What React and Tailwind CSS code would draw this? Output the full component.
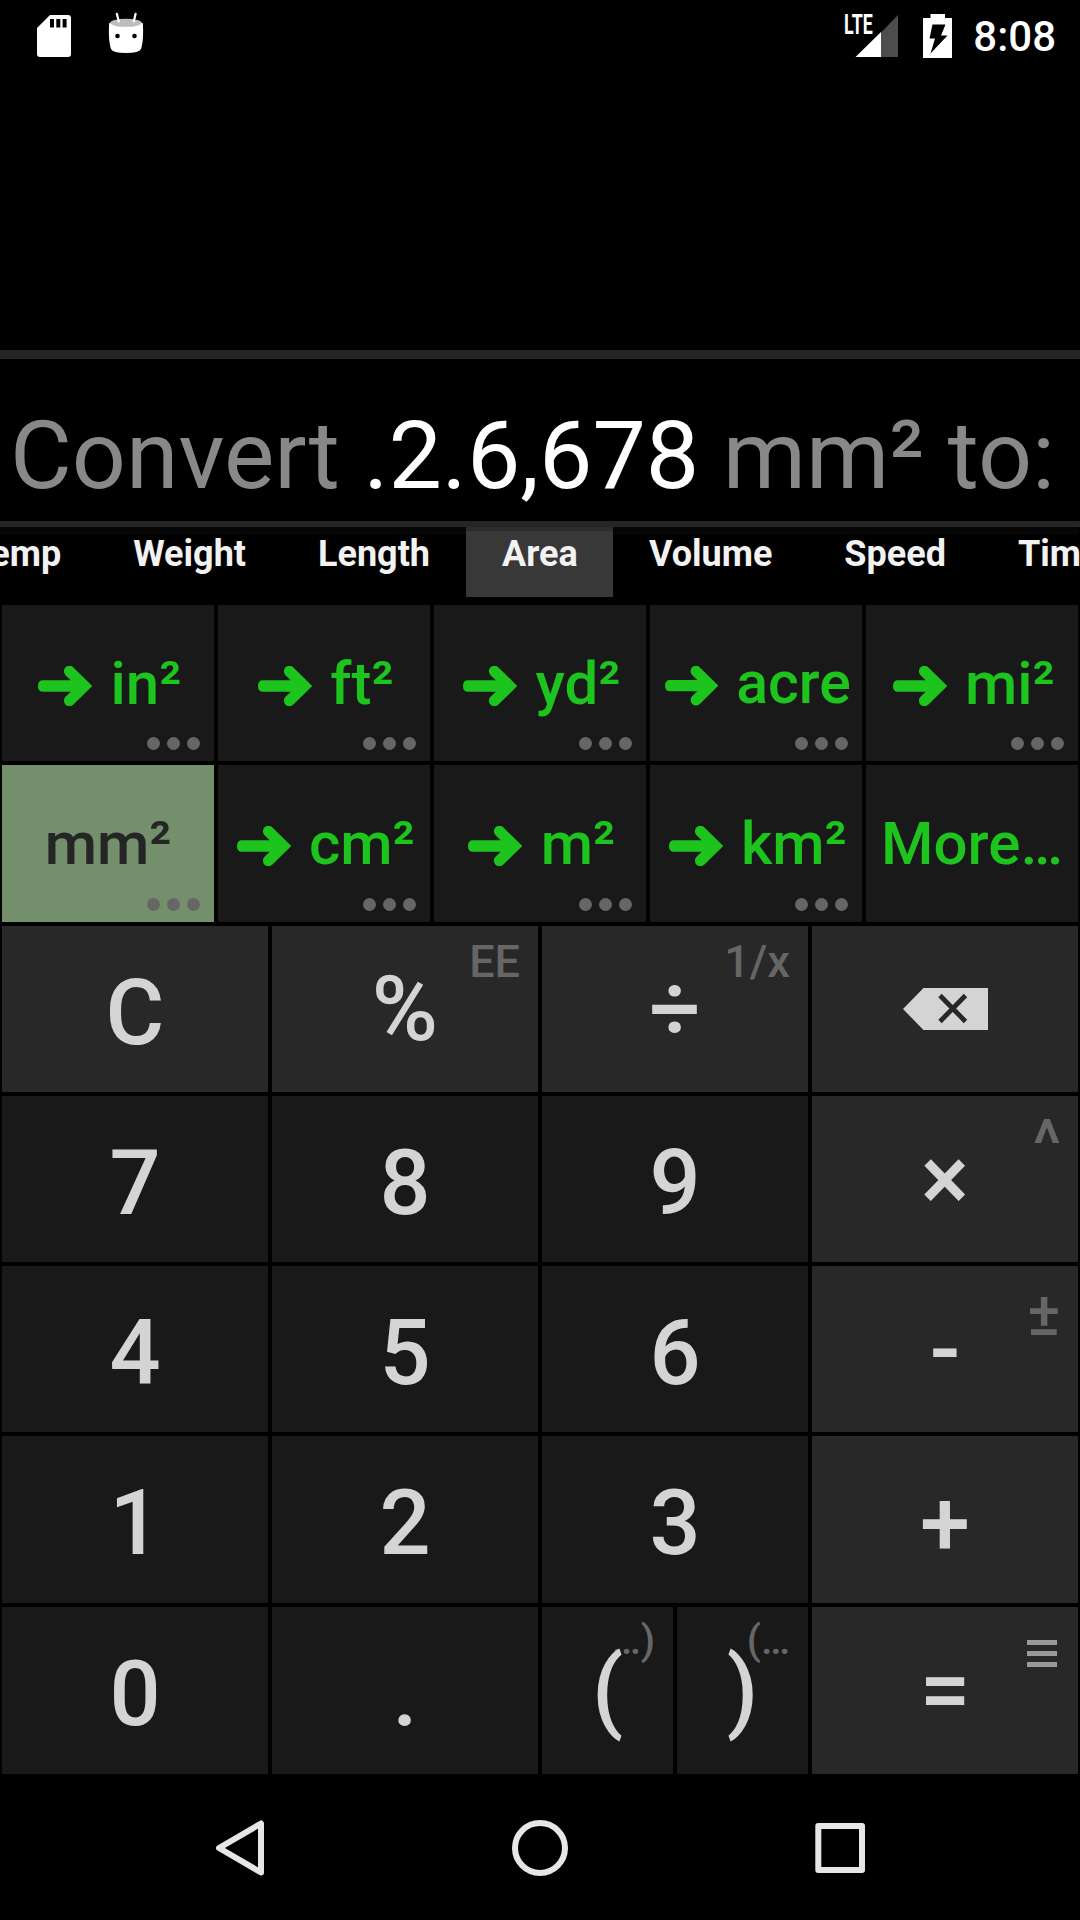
const units = [
  { label: "in²" }, { label: "ft²" }, { label: "yd²" }, { label: "acre", small: true }, { label: "mi²" },
  { label: "mm²", selected: true }, { label: "cm²" }, { label: "m²" }, { label: "km²" }, { label: "More…", more: true },
];

function Arrow({ small }) {
  return (
    <svg viewBox="0 0 54.3 40" className={small ? "ml-[3.5px] h-[39.3px] w-[53.5px] shrink-0" : "ml-[3.5px] h-10 w-[54.3px] shrink-0"} fill="currentColor">
      <path d="M5 14.2H32.8L27.5 9.2A5.5 5.5 0 0 1 35.4 1.4L54.3 20L35.4 38.6A5.5 5.5 0 0 1 27.5 30.8L32.8 25.8H5Q0 25.8 0 20Q0 14.2 5 14.2Z" />
    </svg>
  );
}

function UnitKey({ unit }) {
  return (
    <button className={`relative flex h-full w-full justify-center ${unit.selected ? "bg-[#748f6c] text-[#252525]" : "bg-[#191919] text-[#1ec41e]"}`}>
      <span className="flex items-start gap-[18px] pt-[48px]">
        {!unit.selected && !unit.more && <span className="flex h-[60px] items-center pt-[6px]"><Arrow small={unit.small} /></span>}
        <span className={unit.small ? "text-[59px] leading-[60px]" : "pt-px text-[60px] leading-[60px]"}>{unit.label}</span>
      </span>
      {!unit.more && (
        <span className="absolute bottom-[11px] right-[14.5px] flex gap-[7.3px]">
          <i className="size-[12.7px] rounded-full bg-[#666]" />
          <i className="size-[12.7px] rounded-full bg-[#666]" />
          <i className="size-[12.7px] rounded-full bg-[#666]" />
        </span>
      )}
    </button>
  );
}

function Key({ label, hint, hintClass = "top-[13px] right-[18px] text-[45px]", up = "pt-[43px]", op = false, children }) {
  return (
    <button className={`relative flex h-full min-w-0 flex-1 justify-center text-[#d4d4d4] ${op ? "bg-[#282828]" : "bg-[#191919]"}`}>
      {hint && <span className={`absolute leading-none text-[#666] ${hintClass}`}>{hint}</span>}
      {label && <span className={`relative text-[90px] leading-[90px] ${up}`}>{label}</span>}
      {children}
    </button>
  );
}

function Row({ className, children }) {
  return <div className={`grid grid-cols-4 gap-1 ${className}`}>{children}</div>;
}

function Tab({ children, active }) {
  return (
    <span className={`h-[70px] px-9 text-[36px] leading-[36px] ${active ? "border-t-4 border-[#2c2c2c] bg-[#383838] pt-[5px]" : "pt-[9px]"}`}>{children}</span>
  );
}

export default function App() {
  return (
    <div className="flex h-[1920px] w-[1080px] flex-col overflow-hidden bg-black font-['Roboto',sans-serif] font-medium text-white">
      <header className="flex h-[72px] items-start justify-between pl-[37px] pr-[24px]">
        <div className="flex">
          <svg className="mt-[15px] h-[42px] w-[34px]" viewBox="0 0 34 42">
            <path fill="#fff" d="M13 0H31Q34 0 34 3V39Q34 42 31 42H3Q0 42 0 39V13Z" />
            <path d="M13 4h4v8.500h-4zM19.300 4h4v8.500h-4zM25.600 4h4v8.500h-4z" />
          </svg>
          <svg className="ml-[37px] mt-[12px] h-[42px] w-[36px]" viewBox="0 0 36 42">
            <path d="M1.200 11C.500 20 .900 31 3 37Q4.500 41 18 41T33 37C35.100 31 35.500 20 34.800 11Z" fill="#fff" />
            <ellipse cx="18" cy="10.800" rx="15.800" ry="4" fill="#bdbdbd" />
            <path d="M8.800 1.800L10.800 9.500M27.600 1.800L25.800 9.500" stroke="#fff" strokeWidth="2.200" strokeLinecap="round" />
            <circle cx="9.500" cy="24" r="2.300" />
            <circle cx="26.500" cy="24" r="2.300" />
          </svg>
        </div>
        <div className="flex">
          <div className="relative mt-[15px] h-[42px] w-[53px]">
            <span className="absolute -top-[3px] -left-px origin-left scale-x-[0.66] text-[27px] leading-[27px] font-bold">LTE</span>
            <svg className="h-[42px] w-[53px]" viewBox="0 0 53 42">
              <path d="M36 17.500L53 0V42H36Z" fill="#4d4d4d" />
              <path d="M10.500 42L36 17V42Z" fill="#fff" />
            </svg>
          </div>
          <svg className="ml-[25px] mt-[14px] h-[44px] w-[29px]" viewBox="0 0 29 44">
            <path d="M7.500 0H22V4H29V44H0V4H7.500Z" fill="#fff" />
            <path d="M9.500 10.500H22.500L18 21.500H24.500L7.500 39.500L12 24.500H6.500Z" />
          </svg>
          <span className="ml-[21px] mt-[16px] text-[42px] leading-[42px]">8:08</span>
        </div>
      </header>
      <section className="h-[278px]" />
      <div className="h-[9px] bg-[#252525]" />
      <section className="flex h-[162px] pl-[10px] pt-[49px] text-[95px] leading-[96px] font-normal whitespace-pre text-[#888]">
        <span>Convert <span className="text-white">.2.6,678</span> mm² to:</span>
      </section>
      <div className="h-[6px] bg-[#252525]" />
      <nav className="h-[78px]">
        <div className="grid h-[70px] w-[1079px] grid-cols-[minmax(0,1fr)_147px_minmax(0,1fr)] bg-linear-to-b from-[#050505] from-[8px] to-black to-[8px] font-bold text-[#f2f2f2]">
          <div className="flex justify-end">
            <Tab>Temp</Tab>
            <Tab>Weight</Tab>
            <Tab>Length</Tab>
          </div>
          <Tab active>Area</Tab>
          <div className="flex">
            <Tab>Volume</Tab>
            <Tab>Speed</Tab>
            <Tab>Time</Tab>
          </div>
        </div>
      </nav>
      <section className="grid h-[317px] grid-cols-5 grid-rows-[156px_157px] gap-1 px-0.5">
        {units.map((u) => <UnitKey key={u.label} unit={u} />)}
      </section>
      <section className="mt-1 flex h-[848px] flex-col gap-1 px-0.5">
        <Row className="h-[166px]">
          <Key op label="C" />
          <Key op label="%" up="pt-[39px]" hint="EE" />
          <Key op label="÷" up="pt-[39px]" hint="1/x" />
          <Key op>
            <svg className="mt-[62px] h-[42px] w-[85px]" viewBox="0 0 85 42">
              <path d="M0 21L20.500 0H85V42H20.500Z" fill="#d4d4d4" />
              <path d="M37 7.500L62.500 33.500M62.500 7.500L37 33.500" stroke="#282828" strokeWidth="4.800" />
            </svg>
          </Key>
        </Row>
        <Row className="h-[166px]">
          <Key label="7" />
          <Key label="8" />
          <Key label="9" />
          <Key op label="×" up="pt-[39px]" hint="^" hintClass="top-[16px] right-[17px] text-[66px]" />
        </Row>
        <Row className="h-[166px]">
          <Key label="4" />
          <Key label="5" />
          <Key label="6" />
          <Key op label="-" up="pt-[39px]" hint="±" hintClass="top-[17px] right-[17.5px] text-[62px]" />
        </Row>
        <Row className="h-[167px]">
          <Key label="1" />
          <Key label="2" />
          <Key label="3" />
          <Key op label="+" up="pt-[44px]" />
        </Row>
        <Row className="h-[167px]">
          <Key label="0" />
          <Key label="." />
          <div className="flex gap-1">
            <Key label="(" up="pt-[39px]" hint="…)" hintClass="top-[13px] right-[18px] text-[41px]" />
            <Key label=")" up="pt-[39px]" hint="(…" hintClass="top-[13px] right-[18px] text-[41px]" />
          </div>
          <Key op label="=" up="pt-[39px]">
            <span className="absolute right-[21px] top-[33px] flex w-[30px] flex-col gap-[6px]">
              <i className="h-[5px] bg-[#999]" />
              <i className="h-[5px] bg-[#999]" />
              <i className="h-[5px] bg-[#999]" />
            </span>
          </Key>
        </Row>
      </section>
      <footer className="flex flex-1 justify-center">
        <svg className="h-[146px] w-[1080px]" viewBox="0 1774 1080 146" fill="none" stroke="#e6e6e6" strokeWidth="6" strokeLinejoin="round">
          <path d="M219 1848L261 1823.500V1872.500Z" />
          <circle cx="540" cy="1848" r="25" />
          <path d="M818.300 1826H862V1870H818.300Z" />
        </svg>
      </footer>
    </div>
  );
}
